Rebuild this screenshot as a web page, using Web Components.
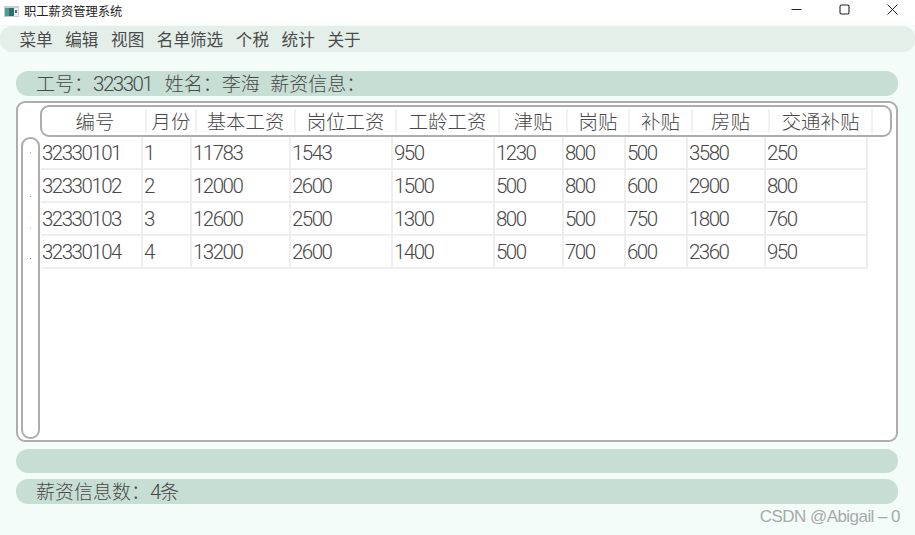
<!DOCTYPE html>
<html lang="zh-CN">
<head>
<meta charset="utf-8">
<title>职工薪资管理系统</title>
<style>
html,body{margin:0;padding:0;height:100%;background:#f3fcf9;overflow:hidden}
body{font-family:"Noto Sans CJK SC","Noto Sans",sans-serif;font-weight:300;color:#484848}
</style>
</head>
<body>
<salary-app></salary-app>
<script>
function def(name,css,html,init){
  customElements.define(name,class extends HTMLElement{
    constructor(){super();const r=this.attachShadow({mode:'open'});r.innerHTML='<style>'+css+'</style>'+html;}
    connectedCallback(){if(init&&!this._i){this._i=1;init(this,this.shadowRoot);}}
  });
}
def('title-bar',`
:host{display:flex;align-items:center;height:25px;background:#fff;color:#222;font-size:12.3px;font-weight:400;padding-left:4px;line-height:1}
svg{display:block}
.logo{margin-right:5px;margin-bottom:3px}
.text{flex:1;padding-bottom:3px}
.ctl{width:48px;display:flex;justify-content:center;align-items:center;height:25px;padding-bottom:6px;box-sizing:border-box}
.ctls{display:flex;margin-right:-1px}
`,`
<svg class="logo" width="15" height="11" viewBox="0 0 15 11"><rect width="15" height="11" fill="#c9ccd0"/><rect x="1" y="2" width="9" height="8" fill="#2f6d72"/><rect x="1" y="2" width="4" height="8" fill="#49a08e"/><rect x="10" y="2" width="4" height="8" fill="#f1f2f3"/><rect x="11" y="4" width="2" height="3" fill="#5c6a70"/></svg>
<span class="text">职工薪资管理系统</span>
<span class="ctls">
<span class="ctl"><svg width="11" height="11" viewBox="0 0 11 11"><path d="M.5 5.5h10" stroke="#222" fill="none"/></svg></span>
<span class="ctl"><svg width="11" height="11" viewBox="0 0 11 11"><rect x="1" y="1" width="9" height="9" rx="1.5" stroke="#222" stroke-width="1.1" fill="none"/></svg></span>
<span class="ctl"><svg width="11" height="11" viewBox="0 0 11 11"><path d="M.5.5l10 10M10.500.5l-10 10" stroke="#222" fill="none"/></svg></span>
</span>`);

def('menu-bar',`
:host{display:flex;align-items:center;gap:12.6px;height:26px;margin-top:1px;padding-left:19.500px;background:#e4efe9;border-radius:12px;font-size:16.6px;line-height:1;font-weight:400;color:#4b4b4b}
`,`<slot></slot>`);

def('pill-bar',`
:host{display:flex;align-items:center;box-sizing:border-box;height:24.500px;margin:0 17px 0 15.500px;padding:0 0 0 20.500px;background:#c7ded4;border-radius:12px;font-size:19px;line-height:1;white-space:pre;word-spacing:2px}
`,`<slot></slot>`);

def('num-text',`
:host{display:inline;font-family:Roboto,sans-serif;font-weight:300;font-size:20.500px;letter-spacing:-1.500px}
`,`<slot></slot>`);

def('table-header',`
:host{display:grid;grid-template-columns:105px 50px 99px 101px 103px 68px 62px 63px 77px 103px 1fr;box-sizing:border-box;height:32px;border:2px solid #adadad;border-radius:9px;background:#fff;font-size:19.400px;line-height:1;padding:2px 0}
`,`<slot></slot>`);
def('header-cell',`
:host{display:flex;align-items:center;justify-content:center;border-right:2px solid #f2f2f2;padding-bottom:1px}
`,`<slot></slot>`);

def('row-rail',`
:host{display:block;box-sizing:border-box;height:302px;border:2px solid #adadad;border-radius:9px;background:#fff;margin-right:.5px;padding-left:1.500px}
.dot{display:block;width:1px;height:1px;margin:0 auto;border-radius:50%}
`,`
<span class="dot" style="margin-top:13px;background:#b97c46"></span>
<span class="dot" style="margin-top:30px;background:#f3dcb4"></span>
<span class="dot" style="margin-top:12px;background:#c2591e"></span>
<span class="dot" style="margin-top:19px;background:#f5ecd2"></span>
<span class="dot" style="margin-top:11px;background:#d98a55"></span>
<span class="dot" style="margin-top:29px;background:#6b4a30"></span>
`);

def('data-table',`
:host{display:grid;grid-template-columns:102px 49px 99px 102px 102px 69px 62px 62px 78px 102px;grid-auto-rows:33px;align-content:start;justify-content:start;margin-left:1px;font-family:Roboto,sans-serif;font-weight:300;font-size:20.500px;letter-spacing:-1.500px;line-height:1}
div{display:flex;align-items:center;padding:2px 0 0 1px;box-sizing:border-box;border-right:2px solid #eeeeee;border-bottom:2px solid #eeeeee}
`,``,(el,r)=>{
  const rows=[
  [32330101,1,11783,1543,950,1230,800,500,3580,250],
  [32330102,2,12000,2600,1500,500,800,600,2900,800],
  [32330103,3,12600,2500,1300,800,500,750,1800,760],
  [32330104,4,13200,2600,1400,500,700,600,2360,950]];
  rows.forEach(row=>row.forEach(v=>{const d=document.createElement('div');d.textContent=v;r.appendChild(d);}));
});

def('table-panel',`
:host{display:grid;grid-template-columns:19.500px 1fr;grid-template-rows:32px 1fr;box-sizing:border-box;height:341px;margin:5.500px 17px 0 15.500px;padding:2px 4px 1px 3px;border:2px solid #adadad;border-radius:9px;background:#fff}
.head{grid-column:2}
`,`
<div class="head"><slot name="head"></slot></div>
<slot name="rail"></slot>
<slot name="table"></slot>`);

def('water-mark',`
:host{position:absolute;right:15px;bottom:10px;font-family:"Liberation Sans",sans-serif;font-weight:400;font-size:17px;letter-spacing:-.55px;line-height:1;color:#a9a9a9;white-space:pre}
`,`<slot></slot>`);

def('salary-app',`
:host{display:block;position:relative;width:915px;height:535px;background:#f3fcf9;overflow:hidden}
.a{margin-top:19px}.c{margin-top:6.500px}.d{margin-top:6px}
.g{margin-left:10.500px}
`,`
<title-bar></title-bar>
<menu-bar><span>菜单</span><span>编辑</span><span>视图</span><span>名单筛选</span><span>个税</span><span>统计</span><span>关于</span></menu-bar>
<pill-bar class="a"><span>工号：<num-text>323301</num-text>  姓名：李海<span class="g">薪资信息：</span></span></pill-bar>
<table-panel>
  <table-header slot="head">
    <header-cell style="padding-left:3px">编号</header-cell><header-cell>月份</header-cell><header-cell>基本工资</header-cell><header-cell>岗位工资</header-cell><header-cell>工龄工资</header-cell><header-cell>津贴</header-cell><header-cell>岗贴</header-cell><header-cell>补贴</header-cell><header-cell>房贴</header-cell><header-cell>交通补贴</header-cell>
  </table-header>
  <row-rail slot="rail"></row-rail>
  <data-table slot="table"></data-table>
</table-panel>
<pill-bar class="c"></pill-bar>
<pill-bar class="d"><span>薪资信息数：<num-text>4</num-text>条</span></pill-bar>
<water-mark>CSDN @Abigail – 0</water-mark>
`);
</script>
</body>
</html>
